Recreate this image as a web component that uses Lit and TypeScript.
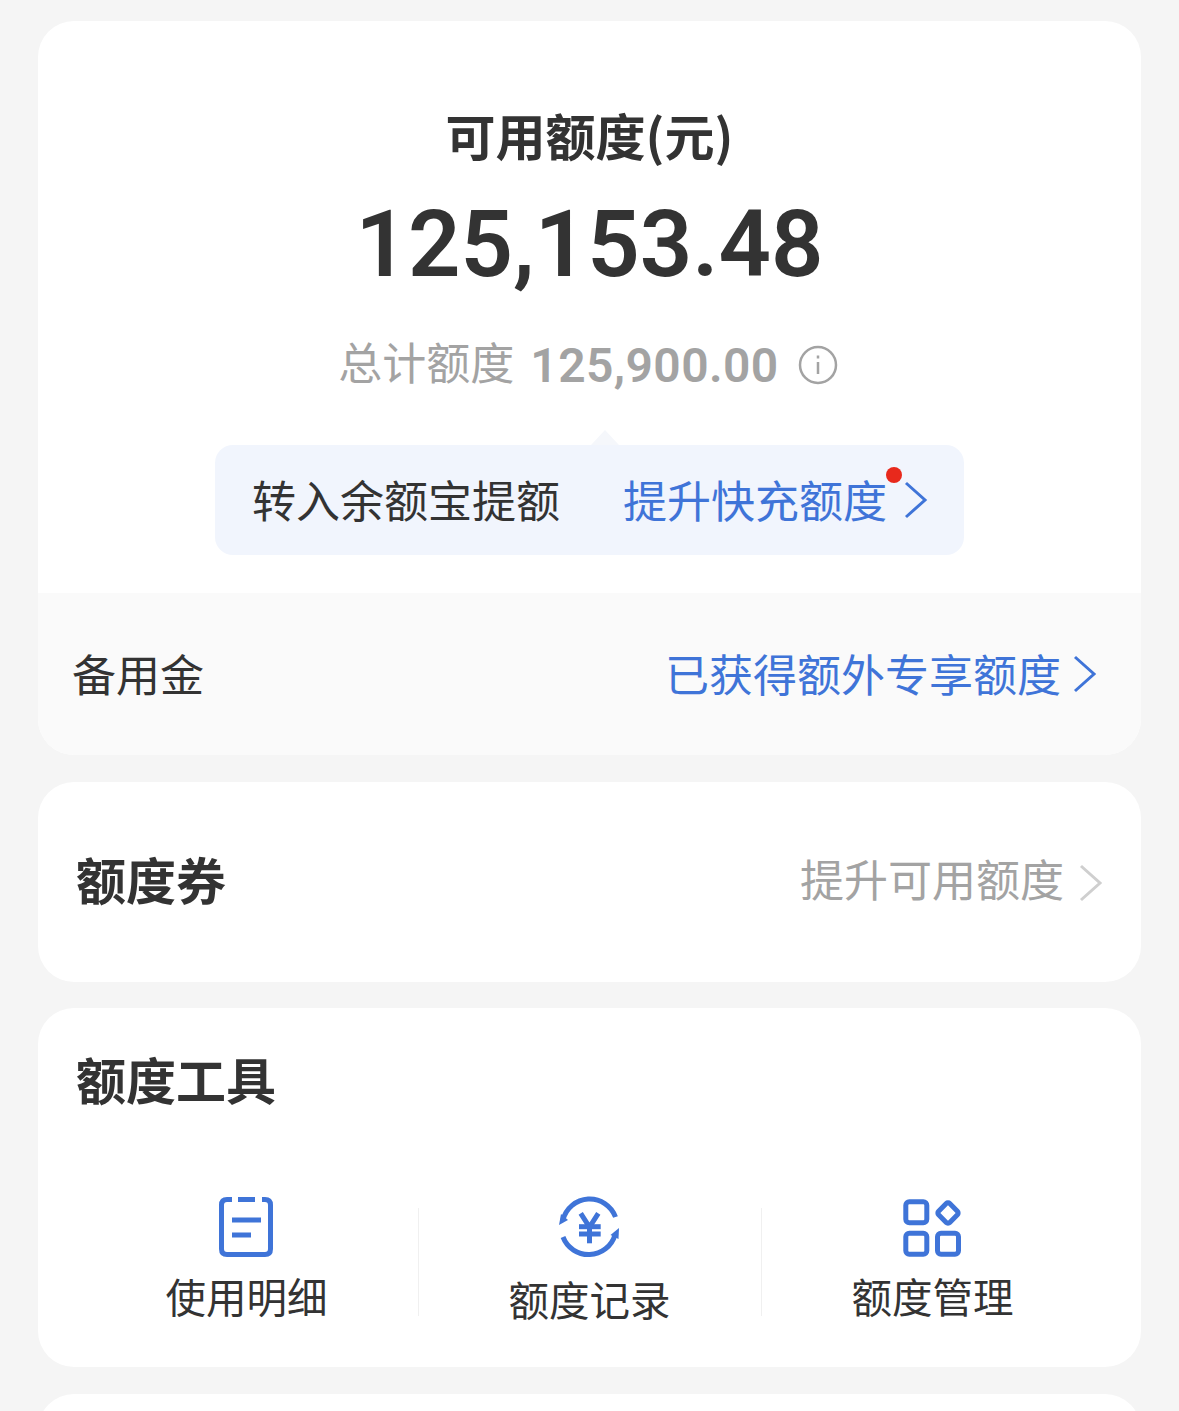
import { LitElement, html, css, svg } from 'lit';
import { customElement } from 'lit/decorators.js';

const chevron = () => html`
  <svg class="chevron" viewBox="0 0 24 38" fill="none" stroke="currentColor" stroke-width="3">
    <path d="M2 2 L21 19 L2 36" />
  </svg>
`;

const tools = [
  {
    label: '使用明细',
    icon: svg`
      <path d="M16 3.500 H11 Q5.500 3.500 5.500 9 V53 Q5.500 58.500 11 58.500 H49 Q54.500 58.500 54.500 53 V9 Q54.500 3.500 49 3.500 H46" />
      <path d="M22 3.500 H39" />
      <path d="M16 24 H45" />
      <path d="M16 39 H35" />
    `,
  },
  {
    label: '额度记录',
    icon: svg`
      <path d="M4 24 A27.500 27.500 0 0 1 56.500 21" />
      <path d="M56 39 A27.500 27.500 0 0 1 4 41" />
      <path class="solid" d="M0 29 L9 24 L2 18 Z" />
      <path class="solid" d="M60 32 L51.500 39 L59.500 43 Z" />
      <path d="M21.700 17.300 L30.500 31 L39.300 17.300" />
      <path d="M20 30.700 H41.700" />
      <path d="M20 38 H41.700" />
      <path d="M30.500 31 V47.300" />
    `,
  },
  {
    label: '额度管理',
    icon: svg`
      <rect x="3.800" y="5.800" width="21" height="21" rx="3.500" />
      <rect x="3.800" y="37.200" width="21" height="21" rx="3.500" />
      <rect x="35.500" y="37.200" width="21" height="21" rx="3.500" />
      <rect x="38.100" y="9.100" width="15.800" height="15.800" rx="2.500" transform="rotate(45 46 17)" />
    `,
  },
];

@customElement('app-root')
export class AppRoot extends LitElement {
  static styles = css`
    :host {
      display: block;
      height: 1411px;
      overflow: hidden;
      background: #f5f5f5;
      padding: 21px 38px 0;
      box-sizing: border-box;
      font-family: "Noto Sans CJK SC", "Liberation Sans", sans-serif;
      color: #333;
    }
    .card {
      background: #fff;
      border-radius: 36px;
      margin-bottom: 27px;
      overflow: hidden;
    }
    .summary {
      height: 572px;
      box-sizing: border-box;
      padding-top: 80px;
      display: flex;
      flex-direction: column;
      align-items: center;
    }
    .title {
      font-size: 50px;
      line-height: 66px;
      font-weight: 700;
    }
    .amount {
      font-family: Roboto, sans-serif;
      font-size: 92px;
      line-height: 108px;
      font-weight: 600;
      margin-top: 24px;
    }
    .total {
      display: flex;
      align-items: center;
      margin-top: 35px;
      margin-right: 3px;
      height: 60px;
      color: #a3a3a3;
      font-size: 44px;
    }
    .total span {
      padding-bottom: 6px;
    }
    .total b {
      font-family: Roboto, sans-serif;
      font-size: 48px;
      font-weight: 600;
      margin-left: 16px;
      margin-top: 2px;
      letter-spacing: 0.4px;
    }
    .info {
      width: 40px;
      height: 40px;
      margin-left: 19px;
      margin-top: 2px;
    }
    .tip {
      position: relative;
      width: 749px;
      height: 110px;
      margin-top: 51px;
      box-sizing: border-box;
      padding: 0 36px 0 37px;
      background: #f1f5fd;
      border-radius: 18px;
      display: flex;
      align-items: center;
      font-size: 44px;
    }
    .tip > span:first-child {
      padding-bottom: 3px;
    }
    .tip::before {
      content: "";
      position: absolute;
      left: 376px;
      top: -15px;
      border-left: 14px solid transparent;
      border-right: 14px solid transparent;
      border-bottom: 15px solid #f5f7fb;
    }
    .tip .link {
      margin-left: auto;
      gap: 17px;
    }
    .dot {
      position: absolute;
      left: 671px;
      top: 22px;
      width: 16px;
      height: 16px;
      border-radius: 50%;
      background: #e8291c;
    }
    .link {
      display: flex;
      align-items: center;
      color: #3f74d8;
      font-size: 44px;
      gap: 12px;
    }
    .link span {
      padding-bottom: 3px;
    }
    .chevron {
      width: 24px;
      height: 38px;
      flex: none;
    }
    .reserve {
      height: 162px;
      box-sizing: border-box;
      background: #fafafa;
      display: flex;
      align-items: center;
      justify-content: space-between;
      padding: 0 44px 0 34px;
      font-size: 44px;
    }
    .reserve > span {
      padding-bottom: 3px;
    }
    .coupon {
      height: 200px;
      margin-bottom: 26px;
      display: flex;
      align-items: center;
      justify-content: space-between;
      padding: 0 38px;
    }
    .heading {
      font-size: 50px;
      font-weight: 700;
      line-height: 66px;
    }
    .coupon .heading {
      padding-bottom: 8px;
    }
    .coupon .more {
      display: flex;
      align-items: center;
      gap: 15px;
      font-size: 44px;
      line-height: 60px;
      color: #a3a3a3;
    }
    .coupon .more .chevron {
      color: #cfcfcf;
      margin-top: 1px;
    }
    .coupon .more span {
      padding-bottom: 9px;
    }
    .tools {
      height: 359px;
      box-sizing: border-box;
      padding: 37px 0 0;
    }
    .tools .heading {
      padding-left: 38px;
    }
    .tool-row {
      display: grid;
      grid-template-columns: repeat(3, 343px);
      justify-content: center;
      margin-top: 85px;
    }
    .tool {
      display: flex;
      flex-direction: column;
      align-items: center;
      font-size: 40.500px;
      line-height: 56px;
      position: relative;
    }
    .tool:nth-child(2) span {
      padding-top: 3px;
    }
    .tool + .tool::before {
      content: "";
      position: absolute;
      left: 0;
      top: 12px;
      width: 1px;
      height: 108px;
      background: #f0f0f0;
    }
    .tool svg {
      width: 60px;
      height: 62px;
      flex: none;
      fill: none;
      stroke: #3f74d8;
      stroke-width: 5;
      margin: 0 2px 10px 0;
    }
    .tool .solid {
      fill: #3f74d8;
      stroke: none;
    }
    .last {
      height: 200px;
    }
  `;

  render() {
    return html`
      <div class="card">
        <div class="summary">
          <div class="title">可用额度(元)</div>
          <div class="amount">125,153.48</div>
          <div class="total">
            <span>总计额度</span><b>125,900.00</b>
            <svg class="info" viewBox="0 0 40 40" fill="none" stroke="#a3a3a3" stroke-width="2.500">
              <circle cx="20" cy="20" r="18" />
              <path d="M20 17 V29" />
              <path d="M20 10.500 V13.500" />
            </svg>
          </div>
          <div class="tip">
            <span>转入余额宝提额</span>
            <div class="link"><span>提升快充额度</span>${chevron()}</div>
            <i class="dot"></i>
          </div>
        </div>
        <div class="reserve">
          <span>备用金</span>
          <div class="link"><span>已获得额外专享额度</span>${chevron()}</div>
        </div>
      </div>
      <div class="card coupon">
        <span class="heading">额度券</span>
        <div class="more"><span>提升可用额度</span>${chevron()}</div>
      </div>
      <div class="card tools">
        <div class="heading">额度工具</div>
        <div class="tool-row">
          ${tools.map(
            (t) => html`
              <div class="tool">
                <svg viewBox="0 0 60 62">${t.icon}</svg>
                <span>${t.label}</span>
              </div>
            `,
          )}
        </div>
      </div>
      <div class="card last"></div>
    `;
  }
}
